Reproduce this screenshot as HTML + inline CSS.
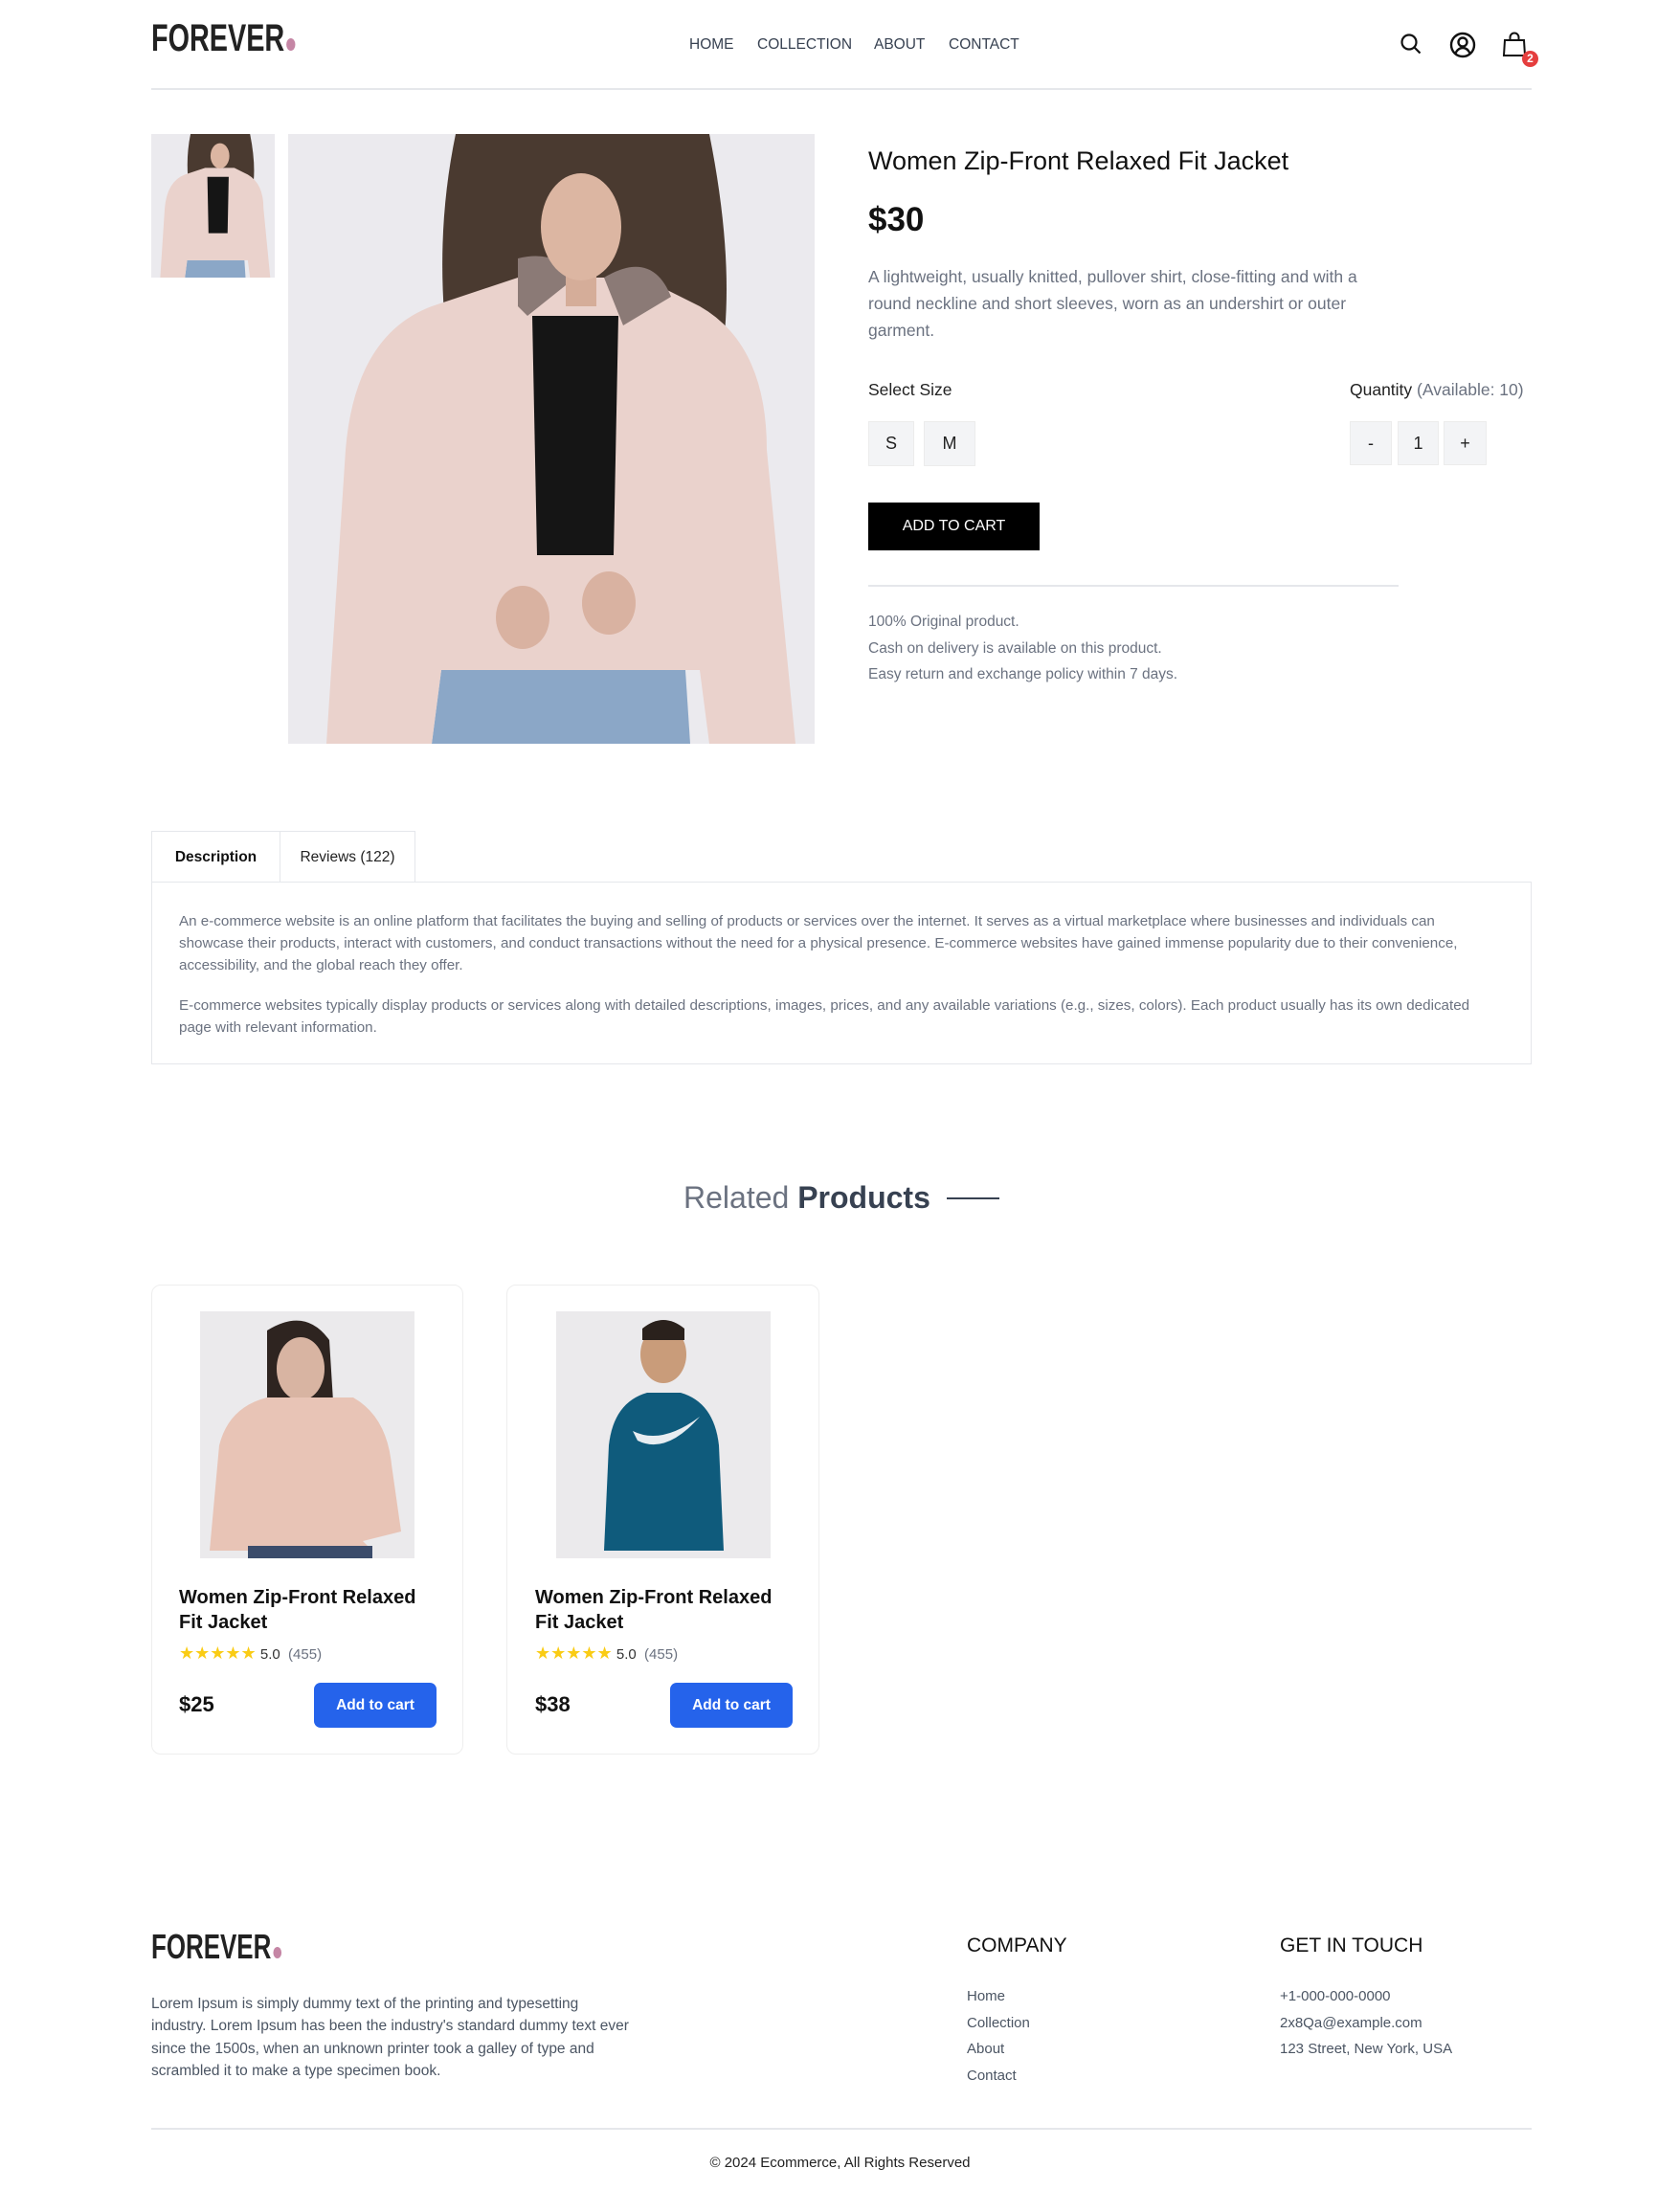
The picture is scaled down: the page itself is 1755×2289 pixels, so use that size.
<!DOCTYPE html>
<html><head><meta charset="utf-8"><style>
*{margin:0;padding:0;box-sizing:border-box}
body{width:1755px;height:2289px;background:#fff;font-family:"Liberation Sans",sans-serif;color:#111;position:relative;overflow:hidden}
.a{position:absolute;white-space:nowrap}
.logo{font-family:"Liberation Sans Narrow","Liberation Sans",sans-serif;font-size:40px;font-weight:bold;letter-spacing:0px;color:#222;transform:scaleX(.72);transform-origin:left}
.dot{display:inline-block;width:13px;height:13px;border-radius:50%;background:#c586a5;margin-left:3px}
.nav{font-size:15.5px;color:#374151}
.btn{position:absolute;background:#f3f4f6;border:1px solid #ececec;display:flex;align-items:center;justify-content:center;font-size:18px;color:#222}
.gray{color:#6b7280}
.card{position:absolute;border:1.5px solid #eee;border-radius:10px;background:#fff}
.blue{position:absolute;background:#2563eb;color:#fff;border-radius:7px;font-size:15.5px;font-weight:bold;display:flex;align-items:center;justify-content:center}
.star{color:#facc15;font-size:18px;letter-spacing:0px}
</style></head><body>

<div class="a logo" style="left:158px;top:18px">FOREVER<span class="dot"></span></div>
<div class="a nav" style="left:720px;top:38px">HOME</div>
<div class="a nav" style="left:791px;top:38px">COLLECTION</div>
<div class="a nav" style="left:913px;top:38px">ABOUT</div>
<div class="a nav" style="left:991px;top:38px">CONTACT</div>
<svg class="a" style="left:1460px;top:32px" width="30" height="30" viewBox="0 0 30 30" fill="none" stroke="#111" stroke-width="2.2"><circle cx="12" cy="12" r="7.5"/><path d="M17.5 17.5l6 6"/></svg>
<svg class="a" style="left:1512px;top:31px" width="32" height="32" viewBox="0 0 32 32" fill="none" stroke="#111" stroke-width="2.4"><circle cx="16" cy="16" r="12"/><circle cx="16" cy="13" r="4.5"/><path d="M8.5 24.5c2-4 4.5-5.5 7.5-5.5s5.5 1.5 7.5 5.5"/></svg>
<svg class="a" style="left:1568px;top:32px" width="30" height="30" viewBox="0 0 30 30" fill="none" stroke="#111" stroke-width="2"><path d="M4 10h20l1 16H3z"/><path d="M9.5 10V7a4.5 4.5 0 0 1 9 0v3"/></svg>
<div class="a" style="left:1590px;top:53px;width:17px;height:17px;border-radius:50%;background:#e53e3e;color:#fff;font-size:12px;font-weight:bold;text-align:center;line-height:17px">2</div>
<div class="a" style="left:158px;top:92px;width:1442px;height:2px;background:#e5e7eb"></div>

<!-- thumbnail -->
<svg class="a" style="left:158px;top:140px" width="129" height="150" viewBox="0 0 550 637" preserveAspectRatio="none">
<rect width="550" height="637" fill="#ebeaee"/>
<path d="M175 0 L440 0 Q470 150 450 250 L170 250 Q150 120 175 0Z" fill="#4a3a30"/>
<path d="M150 637 L420 637 L415 560 L160 560Z" fill="#8ba7c7"/>
<path d="M40 637 L60 330 Q70 210 150 180 L240 150 L370 150 L430 180 Q500 220 500 330 L530 637 L440 637 L430 560 L160 560 L150 637Z" fill="#ead2cc"/>
<path d="M250 190 L345 190 L340 440 L255 440Z" fill="#151515"/>
<ellipse cx="306" cy="97" rx="42" ry="56" fill="#dcb6a2"/>
</svg>

<!-- main image -->
<svg class="a" style="left:301px;top:140px" width="550" height="637" viewBox="0 0 550 637">
<rect width="550" height="637" fill="#ebeaee"/>
<path d="M175 0 L440 0 Q470 150 450 250 L170 250 Q150 120 175 0Z" fill="#4a3a30"/>
<path d="M150 637 L420 637 L415 560 L160 560Z" fill="#8ba7c7"/>
<path d="M40 637 L60 330 Q70 210 150 180 L240 150 L370 150 L430 180 Q500 220 500 330 L530 637 L440 637 L430 560 L160 560 L150 637Z" fill="#ead2cc"/>
<path d="M240 130 Q280 120 300 150 L250 190 L240 180Z" fill="#8b7a76"/>
<path d="M330 150 Q380 120 400 170 L350 200Z" fill="#8b7a76"/>
<path d="M255 190 L345 190 L340 440 L260 440Z" fill="#151515"/>
<rect x="290" y="140" width="32" height="40" fill="#d5ad99"/>
<ellipse cx="306" cy="97" rx="42" ry="56" fill="#dcb6a2"/>
<ellipse cx="245" cy="505" rx="28" ry="33" fill="#d9b2a1"/>
<ellipse cx="335" cy="490" rx="28" ry="33" fill="#d9b2a1"/>
</svg>

<div class="a" style="left:907px;top:153px;font-size:27px;color:#111">Women Zip-Front Relaxed Fit Jacket</div>
<div class="a" style="left:907px;top:210px;font-size:35px;font-weight:bold">$30</div>
<div class="a gray" style="left:907px;top:275px;font-size:17.5px;line-height:28px;white-space:normal;width:560px">A lightweight, usually knitted, pullover shirt, close-fitting and with a round neckline and short sleeves, worn as an undershirt or outer garment.</div>
<div class="a" style="left:907px;top:397px;font-size:17.5px;color:#222">Select Size</div>
<div class="a" style="left:1410px;top:397px;font-size:17.5px;color:#222">Quantity <span class="gray">(Available: 10)</span></div>
<div class="btn" style="left:907px;top:440px;width:48px;height:47px">S</div>
<div class="btn" style="left:965px;top:440px;width:54px;height:47px">M</div>
<div class="btn" style="left:1410px;top:440px;width:44px;height:46px">-</div>
<div class="btn" style="left:1460px;top:440px;width:43px;height:46px">1</div>
<div class="btn" style="left:1508px;top:440px;width:45px;height:46px">+</div>
<div class="a" style="left:907px;top:525px;width:179px;height:50px;background:#000;color:#fff;font-size:16px;display:flex;align-items:center;justify-content:center">ADD TO CART</div>
<div class="a" style="left:907px;top:611px;width:554px;height:1.5px;background:#e5e7eb"></div>
<div class="a gray" style="left:907px;top:636px;font-size:15.5px;line-height:27.5px">100% Original product.<br>Cash on delivery is available on this product.<br>Easy return and exchange policy within 7 days.</div>

<!-- tabs -->
<div class="a" style="left:158px;top:868px;width:135px;height:54px;border:1.5px solid #e5e7eb;border-bottom:none;font-size:15.5px;font-weight:bold;display:flex;align-items:center;justify-content:center">Description</div>
<div class="a" style="left:292px;top:868px;width:142px;height:54px;border:1.5px solid #e5e7eb;border-bottom:none;font-size:15.5px;display:flex;align-items:center;justify-content:center;color:#222">Reviews (122)</div>
<div class="a" style="left:158px;top:921px;width:1442px;height:191px;border:1.5px solid #e5e7eb"></div>
<div class="a gray" style="left:187px;top:951px;width:1380px;white-space:normal;font-size:15.2px;line-height:23px">An e-commerce website is an online platform that facilitates the buying and selling of products or services over the internet. It serves as a virtual marketplace where businesses and individuals can showcase their products, interact with customers, and conduct transactions without the need for a physical presence. E-commerce websites have gained immense popularity due to their convenience, accessibility, and the global reach they offer.<div style="height:19px"></div>E-commerce websites typically display products or services along with detailed descriptions, images, prices, and any available variations (e.g., sizes, colors). Each product usually has its own dedicated page with relevant information.</div>

<div class="a" style="left:714px;top:1233px;font-size:32px;color:#6b7280">Related <b style="color:#374151">Products</b></div>
<div class="a" style="left:989px;top:1251px;width:55px;height:2px;background:#374151"></div>

<!-- cards -->
<div class="card" style="left:158px;top:1342px;width:326px;height:491px"></div>
<svg class="a" style="left:209px;top:1370px" width="224" height="258" viewBox="0 0 224 258"><rect width="224" height="258" fill="#ebeaec"/><path d="M70 20 Q110 -5 135 30 L140 110 L70 110Z" fill="#2e2420"/><ellipse cx="105" cy="60" rx="25" ry="33" fill="#d8b4a2"/><path d="M10 250 L20 140 Q30 100 70 90 L160 90 Q195 110 200 160 L210 230 L170 240 L180 250Z" fill="#e8c4b6"/><rect x="50" y="245" width="130" height="13" fill="#3b4c6b"/></svg>
<div class="a" style="left:187px;top:1656px;font-size:20px;font-weight:bold;line-height:26px;color:#111">Women Zip-Front Relaxed<br>Fit Jacket</div>
<div class="a" style="left:187px;top:1717px;font-size:15px;color:#333"><span class="star">★★★★★</span> 5.0 <span class="gray">&nbsp;(455)</span></div>
<div class="a" style="left:187px;top:1768px;font-size:22px;font-weight:bold">$25</div>
<div class="blue" style="left:328px;top:1758px;width:128px;height:47px">Add to cart</div>

<div class="card" style="left:529px;top:1342px;width:327px;height:491px"></div>
<svg class="a" style="left:581px;top:1370px" width="224" height="258" viewBox="0 0 224 258"><rect width="224" height="258" fill="#ebeaec"/><ellipse cx="112" cy="45" rx="24" ry="30" fill="#c99c7a"/><path d="M90 18 Q112 0 134 18 L134 30 L90 30Z" fill="#2a211c"/><path d="M50 250 L55 140 Q60 95 95 85 L130 85 Q165 95 170 140 L175 250Z" fill="#0f5b7c"/><path d="M80 125 Q110 140 150 110 Q115 150 85 135Z" fill="#e8eef2"/></svg>
<div class="a" style="left:559px;top:1656px;font-size:20px;font-weight:bold;line-height:26px;color:#111">Women Zip-Front Relaxed<br>Fit Jacket</div>
<div class="a" style="left:559px;top:1717px;font-size:15px;color:#333"><span class="star">★★★★★</span> 5.0 <span class="gray">&nbsp;(455)</span></div>
<div class="a" style="left:559px;top:1768px;font-size:22px;font-weight:bold">$38</div>
<div class="blue" style="left:700px;top:1758px;width:128px;height:47px">Add to cart</div>

<!-- footer -->
<div class="a logo" style="left:158px;top:2013px;font-size:36px">FOREVER<span class="dot" style="width:12px;height:12px"></span></div>
<div class="a gray" style="left:158px;top:2082px;width:500px;white-space:normal;font-size:15.5px;line-height:23.3px;color:#4b5563">Lorem Ipsum is simply dummy text of the printing and typesetting industry. Lorem Ipsum has been the industry's standard dummy text ever since the 1500s, when an unknown printer took a galley of type and scrambled it to make a type specimen book.</div>
<div class="a" style="left:1010px;top:2021px;font-size:21px;color:#111">COMPANY</div>
<div class="a" style="left:1337px;top:2021px;font-size:21px;color:#111">GET IN TOUCH</div>
<div class="a" style="left:1010px;top:2072px;font-size:15px;line-height:27.7px;color:#4b5563">Home<br>Collection<br>About<br>Contact</div>
<div class="a" style="left:1337px;top:2072px;font-size:15px;line-height:27.7px;color:#4b5563">+1-000-000-0000<br>2x8Qa@example.com<br>123 Street, New York, USA</div>
<div class="a" style="left:158px;top:2223px;width:1442px;height:1.5px;background:#e5e7eb"></div>
<div class="a" style="left:0;width:1755px;text-align:center;top:2251px;font-size:15px;color:#222">© 2024 Ecommerce, All Rights Reserved</div>
</body></html>
